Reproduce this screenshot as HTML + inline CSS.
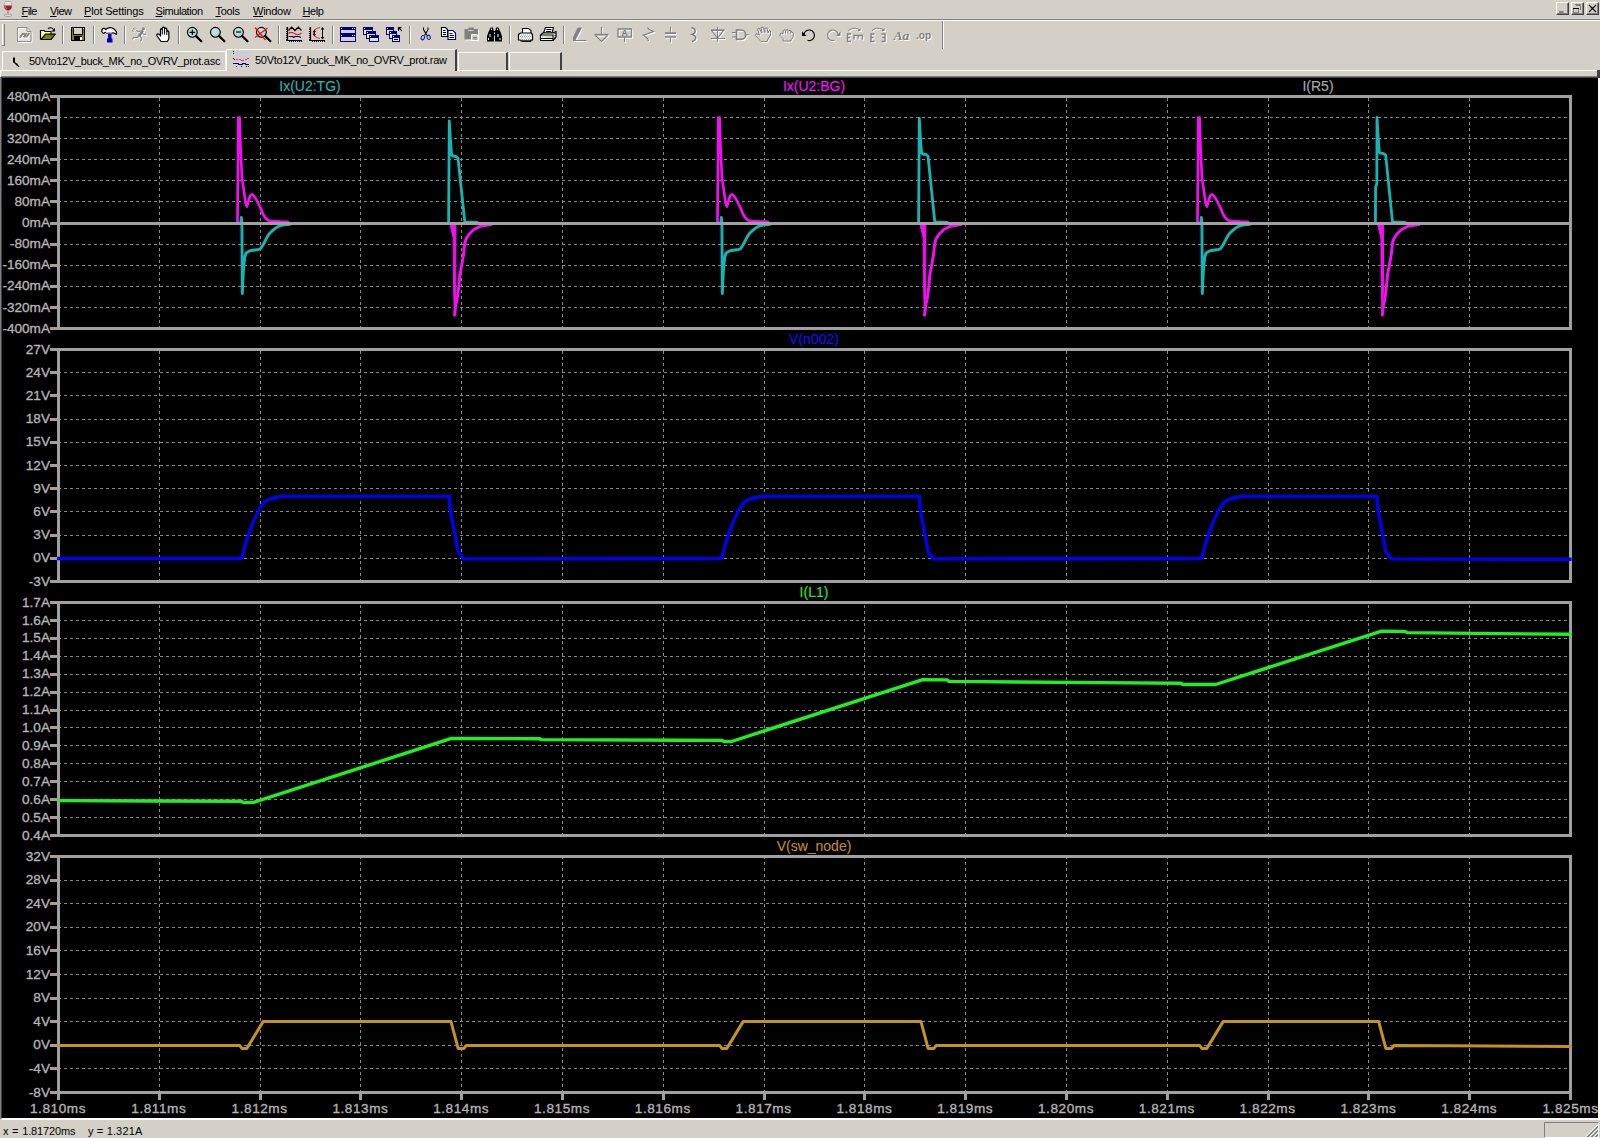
<!DOCTYPE html>
<html lang="en">
<head>
<meta charset="utf-8">
<title>LTspice IV - 50Vto12V_buck_MK_no_OVRV_prot.raw</title>
<style>
html,body{margin:0;padding:0;}
body{width:1600px;height:1138px;overflow:hidden;background:#d4d0c8;position:relative;font-family:"Liberation Sans",Arial,sans-serif;font-size:11px;color:#000;}
.abs{position:absolute;}
#menubar{position:absolute;left:0;top:0;width:1600px;height:19px;}
#menubar span.mi{position:absolute;top:5px;line-height:13px;white-space:nowrap;}
#menubar u{text-decoration:underline;text-underline-offset:1px;}
.hline{position:absolute;left:0;width:1600px;height:1px;}
#toolbar{position:absolute;left:0;top:21px;width:1600px;height:28px;}
.sep{position:absolute;top:4px;width:1px;height:20px;background:#808080;border-right:1px solid #fff;}
.ico{position:absolute;overflow:visible;}
.tab{position:absolute;box-sizing:border-box;white-space:nowrap;}
.tab span{position:absolute;white-space:nowrap;line-height:13px;letter-spacing:-0.3px;}
#status{position:absolute;left:0;top:1120px;width:1600px;height:18px;background:#d4d0c8;}
#status span{position:absolute;top:5px;line-height:13px;white-space:pre;}
.wbtn{position:absolute;top:2px;width:13px;height:13px;box-sizing:border-box;background:#d4d0c8;border:1px solid;border-color:#fff #404040 #404040 #fff;box-shadow:inset -1px -1px 0 #808080;}
#plot{position:absolute;left:0;top:0;}
</style>
</head>
<body>
<!-- ======== menu bar ======== -->
<div id="menubar">
<svg class="ico" style="left:0;top:0" width="16" height="18" viewBox="0 0 16 18"><path d="M5.200 1.500C4.500 3 4 5 4.200 7 4.500 9.500 6.500 10.500 8 10.500S11.500 9.500 11.800 7C12 5 11.500 3 10.800 1.500z" fill="#e6e4df" stroke="#a6a49e" stroke-width="0.800"/><path d="M4.250 5.400H11.750C12 8 10.500 10.300 8 10.300S4 8 4.250 5.400z" fill="#a8162a"/><path d="M5.500 6.200C5.400 7.600 5.900 8.700 6.600 9.300" stroke="#e4707e" stroke-width="1" fill="none"/><rect x="7.200" y="10.300" width="1.600" height="4.400" fill="#a29e9a"/><ellipse cx="8" cy="15.300" rx="3.900" ry="1.200" fill="#e2e0dc" stroke="#96928e" stroke-width="0.800"/></svg>
<span class="mi" style="left:21.5px;letter-spacing:-0.6px"><u>F</u>ile</span>
<span class="mi" style="left:50px;letter-spacing:-0.6px"><u>V</u>iew</span>
<span class="mi" style="left:84px;letter-spacing:-0.17px"><u>P</u>lot Settings</span>
<span class="mi" style="left:155.5px;letter-spacing:-0.42px"><u>S</u>imulation</span>
<span class="mi" style="left:215.5px;letter-spacing:-0.3px"><u>T</u>ools</span>
<span class="mi" style="left:253px;letter-spacing:-0.25px"><u>W</u>indow</span>
<span class="mi" style="left:302.5px;letter-spacing:-0.45px"><u>H</u>elp</span>
<div class="wbtn" style="left:1556px"><svg class="abs" style="left:0;top:0" width="11" height="11"><path d="M2 9h4.500" stroke="#808080" stroke-width="2"/></svg></div>
<div class="wbtn" style="left:1571px"><svg class="abs" style="left:0;top:0" width="11" height="11" shape-rendering="crispEdges"><path d="M3.500 2.500h5v4" stroke="#808080" stroke-width="1" fill="none"/><path d="M3 1.500h6" stroke="#808080" stroke-width="1"/><path d="M1.500 5.500h5v4h-5z" stroke="#808080" stroke-width="1" fill="none"/><path d="M1 5.500h6" stroke="#000" stroke-width="1"/></svg></div>
<div class="wbtn" style="left:1586px"><svg class="abs" style="left:0;top:0" width="11" height="11"><path d="M2 2l7 7M9 2l-7 7" stroke="#000" stroke-width="1.300"/></svg></div>
</div>
<div class="hline" style="top:19px;background:#808080"></div>
<div class="hline" style="top:20px;background:#fff"></div>
<!-- ======== toolbar ======== -->
<svg id="toolbar" width="1600" height="28" viewBox="0 21 1600 28" style="position:absolute;left:0;top:21px">
<defs>
<linearGradient id="lens" x1="0" y1="0" x2="1" y2="1"><stop offset="0" stop-color="#dcdad2"/><stop offset="0.45" stop-color="#c8dcd4"/><stop offset="1" stop-color="#70e0d0"/></linearGradient><g id="mag"><circle cx="0" cy="0" r="4.900" fill="url(#lens)" stroke="#000" stroke-width="1.150"/><path d="M3.800 3.800L9 9" stroke="#000" stroke-width="2.200" stroke-linecap="round"/></g>
<g id="d-pencil"><path d="M577.700 27.500h4.300l-6.500 12.500h-2.500v-2.500z" stroke="none"/><path d="M573 40.500h13.500" stroke-width="1" fill="none"/></g>
<g id="d-gnd"><path d="M601.500 27v7.500M595.500 35.500l6 6 6-6" fill="none" stroke-width="1.200"/><path d="M594.500 34.700h14" fill="none" stroke-width="1.700"/></g>
<g id="d-label"><path d="M618 29h13.500v8h-13.500z" fill="none" stroke-width="1.300" stroke-linejoin="round"/><path d="M624.500 37v5" fill="none" stroke-width="1"/></g>
<g id="d-res"><path d="M647.500 27.500l1.300 1.700 4.700 2.400-10.300 3.600 4.300 3.200 1 2.600" fill="none" stroke-width="1.200"/></g>
<g id="d-cap"><path d="M670.500 27v5.500M670.500 38v4.500" fill="none" stroke-width="1"/><path d="M665 33.200h11M665 37h11" fill="none" stroke-width="1.700"/></g>
<g id="d-ind"><path d="M691.500 27.500c5 1.500 5 5.500.5 7 5 1.500 5 5.500 0 7" fill="none" stroke-width="1.400"/></g>
<g id="d-diode"><path d="M717.500 27v15" fill="none" stroke-width="1"/><path d="M711 30.200h13.500" fill="none" stroke-width="1.700"/><path d="M711.500 30.500l6 7.500 6-7.500" fill="none" stroke-width="1.200"/><path d="M711 38.500h14" fill="none" stroke-width="1"/></g>
<g id="d-gate"><path d="M736.500 30h4.500a4.700 4.700 0 0 1 0 9.400h-4.500z" fill="none" stroke-width="1.700"/><path d="M732 32.500h4M732 37h4M746 34.700h3.500" fill="none" stroke-width="1"/></g>
<g id="d-move"><path d="M761 41.500l-5.500-6 .8-2 3.200 1.700-2-6.200 1.500-1 3 5-1-5.500 2-.5 2 5.500v-4.500h2l1 5 1-2.500 1.500.5v4l-2.500 4-1 2.500z" fill="none" stroke-width="1"/></g>
<g id="d-drag"><path d="M783 41v-2.500l-3-3v-1.500l1.500-1 1.500 1v-3l1.500-1.200 1.500.7.500-.8h1.500l1 1 1.200-.5 1.300 1v1l1.500.5.500 1.500-.5 3-2 2.500V41z" fill="none" stroke-width="1"/><path d="M785.500 31v2.500M788 30v3.500M790.500 31v2.500" fill="none" stroke-width="1"/></g>
<g id="d-redo"><path d="M834.500 40.300a5.300 5.300 0 1 1 3.500-6.300" fill="none" stroke-width="1.100"/><path d="M840.500 31.500v4.500h-4.500z" stroke="none"/></g>
<g id="d-rot"><path d="M851 34h-3.500v7.500h3.500M847.500 37.500h2.500" fill="none" stroke-width="1.400"/><path d="M854 39.500v-4h8.500v4M858.200 35.500v3" fill="none" stroke-width="1.300"/><path d="M848.500 31c2-3 6-3.500 10.500-1.500" fill="none" stroke-width="1"/><path d="M860.500 28v3h-3z" stroke="none"/></g>
<g id="d-mir"><path d="M874.500 34h-3.500v7.500h3.500M871 37.500h2.500" fill="none" stroke-width="1.400"/><path d="M881.500 34h3.500v7.500h-3.500M885 37.500h-2.500" fill="none" stroke-width="1.400"/><path d="M872 31c2-3 6-3.500 11-1.500" fill="none" stroke-width="1"/><path d="M884.500 28v3h-3z" stroke="none"/></g>
<g id="d-run"><circle cx="143.500" cy="28.800" r="1.500" stroke="none"/><path d="M143 30.500l-4 5.500" fill="none" stroke-width="2.600"/><path d="M142 32.500l1.500 1.800h2.700M141 31l-3 .5-1.500-1.200M139.500 35.500l-2 2h-4l-1 1.700M140 35.500l1.800 3.500-1.500 2.500" fill="none" stroke-width="1.100"/><path d="M133 28.500l1.500 1M132 30.500l1.500 1M135 27.500l1 1" fill="none" stroke-width="1"/></g>
<g id="d-new"><path d="M17.500 27.500h9.500l4 4v10h-13.500z" fill="none" stroke-width="1"/><path d="M27 27.500v4h4" fill="none" stroke-width="1"/><path d="M19.800 37.700l2.700-3.700h3.300l-2 3.200M24 36.500h2.800l2.600-3.800" fill="none" stroke-width="2"/></g>
<g id="d-paste"><path d="M464.500 29h13.500v10.500h-13.500z" stroke="none"/><path d="M468.500 27.500h5.500v2h-5.500z" stroke="none"/></g>
</defs>
<!-- gripper -->
<path d="M2.500 24v21" stroke="#fff" stroke-width="1"/><path d="M3.500 24v21" stroke="#d4d0c8" stroke-width="1"/><path d="M4.500 24v21M2 45.500h3" stroke="#808080" stroke-width="1"/>
<!-- separators -->
<path d="M62.500 26v18M93.500 26v18M124.500 26v18M178.500 26v18M278.500 26v18M332.500 26v18M409.500 26v18M509.500 26v18M563.500 26v18" stroke="#808080" stroke-width="1"/>
<path d="M63.500 26v18M94.500 26v18M125.500 26v18M179.500 26v18M279.500 26v18M333.500 26v18M410.500 26v18M510.500 26v18M564.500 26v18" stroke="#fff" stroke-width="1"/>
<path d="M942.500 21v28" stroke="#808080" stroke-width="1"/><path d="M943.500 21v28" stroke="#fff" stroke-width="1"/>
<!-- new (disabled) -->
<path d="M18 28h9l3.500 3.500V41.500H18z" fill="#e4e2dc"/>
<use href="#d-new" x="1" y="1" stroke="#fff" fill="#fff"/><use href="#d-new" stroke="#8c8c8c" fill="#8c8c8c"/>
<!-- open -->
<g>
<path d="M40.500 39.500v-9h3.500l1 1h6v3" fill="#ffff9c" stroke="#000" stroke-width="1.200"/>
<path d="M41 39.500l4.500-5.300h9.800l-4.300 5.300z" fill="#808000" stroke="#000" stroke-width="1.200" stroke-linejoin="round"/>
<path d="M48 28.800c1.500-1.500 4-1.500 5.800 1" fill="none" stroke="#000" stroke-width="1.100"/><path d="M55 28v3.500h-3.500z" fill="#000"/>
</g>
<!-- save -->
<g shape-rendering="crispEdges">
<rect x="71" y="27" width="14" height="14" fill="#000"/>
<rect x="72" y="28" width="12" height="12" fill="#808000"/>
<rect x="74" y="28" width="8" height="6" fill="#d4d0c8"/>
<rect x="73" y="27" width="1" height="14" fill="#000" opacity="0"/>
<rect x="74" y="34" width="8" height="1" fill="#000"/>
<rect x="74" y="36" width="8" height="5" fill="#000"/>
<rect x="80" y="37" width="2" height="3" fill="#fff"/>
<rect x="83" y="28" width="1" height="1" fill="#fff"/><rect x="73" y="28" width="1" height="7" fill="#000"/><rect x="82" y="28" width="1" height="7" fill="#000"/>
</g>
<!-- hammer -->
<g>
<path d="M102 29.500c1-1.500 2.500-1.500 4 0 2-2.500 7-3.500 10.500 2.500v2.500c-1.500-1.500-3-2-5-1.500h-4.500c-1-1-2.500-.5-3.500.5-1.300-.8-2-2.500-1.500-4z" fill="#fff" stroke="#000" stroke-width="1.200" stroke-linejoin="round"/>
<path d="M106 32.500h6" stroke="#b0b0b0" stroke-width="1"/>
<path d="M108 34h3.500v4.500h1v4h-5.500v-4h1z" fill="#0000c0"/>
</g>
<!-- run (disabled) -->
<use href="#d-run" x="1" y="1" stroke="#fff" fill="#fff"/><use href="#d-run" stroke="#808080" fill="#808080"/>
<!-- halt hand -->
<g>
<path d="M160.500 36V29.500c.3-1.200 1.500-1.200 1.800 0V28c.4-1.300 1.900-1.300 2.300 0v1c.4-1.200 1.800-1.200 2.200 0v2.500c.5-1 1.700-.8 2 .3V39l-1.500 2.500h-6.300L156.500 35c.8-1.300 1.800-1.500 2.800-.5z" fill="#fff" stroke="#000" stroke-width="1.200" stroke-linejoin="round"/>
<path d="M162.300 29.500v5M164.600 29v5.500M166.800 31v4" stroke="#000" stroke-width="1" fill="none"/>
</g>
<!-- magnifiers -->
<use href="#mag" x="192.300" y="32.300"/><path d="M189.500 32.300h5.600M192.300 29.500v5.600" stroke="#000" stroke-width="1.200"/>
<use href="#mag" x="215.400" y="32.300"/>
<use href="#mag" x="238.500" y="32.300"/><path d="M236 32h5" stroke="#000" stroke-width="1.200"/>
<use href="#mag" x="261.400" y="32.300"/><path d="M255 27.500l10.500 12.500M267.500 28l-12.500 9.500" stroke="#f01010" stroke-width="1.300"/>
<!-- plot icon 1 -->
<g fill="none">
<path d="M287.500 27v14M286 40.500h16" stroke="#000" stroke-width="1.200"/>
<path d="M286 29.500h1M286 31.500h1M286 33.500h1M286 35.500h1M286 37.500h1M286 28h1M286 39.500h1" stroke="#000" stroke-width="1"/>
<path d="M289.500 41v1M291.500 41v1M293.500 41v1M295.500 41v1M297.500 41v1M299.500 41v1M301.500 41v1" stroke="#000" stroke-width="1"/>
<path d="M288.500 30.500l3.200-3.300 3.300 3.300 3.300-3.300 3.200 3.300" stroke="#000" stroke-width="1.250"/>
<path d="M288.500 33.500c1.500-1.500 3-1.500 5-.5s3.500 2 5 1.500 2-.8 3-1.500" stroke="#e02020" stroke-width="1.100"/>
<path d="M288.500 36.500h4l1.200 1 1.200-1h4l2 1" stroke="#000080" stroke-width="1.200"/>
</g>
<!-- plot icon 2 -->
<g fill="none">
<path d="M310.500 27v14M309 40.500h16" stroke="#000" stroke-width="1.200"/>
<path d="M309 29.500h1M309 31.500h1M309 33.500h1M309 35.500h1M309 37.500h1M309 28h1M309 39.500h1" stroke="#000" stroke-width="1"/>
<path d="M312.500 41v1M314.500 41v1M316.500 41v1M318.500 41v1M320.500 41v1M322.500 41v1M324.500 41v1" stroke="#000" stroke-width="1"/>
<path d="M320 27.500c-9 2-9 9 0 11" stroke="#e83030" stroke-width="1.100"/>
<path d="M322.500 28v10.500" stroke="#000" stroke-width="1"/><path d="M322.500 27l1.800 2.500h-3.600zM322.500 39.500l1.800-2.500h-3.600z" fill="#000"/>
<path d="M314.500 31v4" stroke="#000" stroke-width="1"/><path d="M314.500 30l1.500 2h-3zM314.500 36l1.500-2h-3z" fill="#000"/>
</g>
<!-- tile -->
<g shape-rendering="crispEdges">
<rect x="340" y="27" width="16" height="15" fill="#000080"/>
<rect x="341" y="30" width="14" height="3" fill="#d4d0c8"/><rect x="341" y="37" width="14" height="4" fill="#d4d0c8"/>
<rect x="341" y="28" width="1" height="1" fill="#fff"/><rect x="352" y="28" width="1" height="1" fill="#fff"/><rect x="354" y="28" width="1" height="1" fill="#fff"/>
<rect x="341" y="35" width="1" height="1" fill="#fff"/><rect x="352" y="35" width="1" height="1" fill="#fff"/><rect x="354" y="35" width="1" height="1" fill="#fff"/>
</g>
<!-- cascade -->
<g shape-rendering="crispEdges">
<rect x="363" y="27" width="10" height="8" fill="#000080"/><rect x="364" y="30" width="8" height="4" fill="#e8e8f4"/><rect x="364" y="28" width="1" height="1" fill="#fff"/>
<rect x="366" y="31" width="10" height="8" fill="#000080"/><rect x="367" y="34" width="8" height="4" fill="#e8e8f4"/><rect x="367" y="32" width="1" height="1" fill="#fff"/>
<rect x="369" y="35" width="10" height="7" fill="#000080"/><rect x="370" y="38" width="8" height="3" fill="#e0e0ec"/><rect x="370" y="36" width="1" height="1" fill="#fff"/>
</g>
<!-- close all -->
<g shape-rendering="crispEdges">
<rect x="386" y="27" width="8" height="8" fill="#000080"/><rect x="387" y="30" width="6" height="4" fill="#e8e8f4"/><rect x="387" y="28" width="1" height="1" fill="#fff"/>
<rect x="389" y="31" width="8" height="8" fill="#000080"/><rect x="390" y="34" width="6" height="4" fill="#e8e8f4"/><rect x="390" y="32" width="1" height="1" fill="#fff"/>
<rect x="392" y="35" width="8" height="7" fill="#000080"/><rect x="393" y="38" width="6" height="3" fill="#e8e8f4"/><rect x="393" y="36" width="1" height="1" fill="#fff"/>
<rect x="394" y="39" width="4" height="1" fill="#000"/>
</g>
<path d="M398 27.500h3.500M398.500 27v4M398.500 27.500l3.500 3.500" stroke="#000" stroke-width="1.100" fill="none"/>
<!-- cut -->
<g fill="none">
<path d="M423.500 27.500v2l3.500 6M428 27.500v2l-3.500 6" stroke="#000" stroke-width="1.050"/>
<ellipse cx="422.800" cy="37.700" rx="1.600" ry="2.200" stroke="#1010c0" stroke-width="1" transform="rotate(20 422.800 37.700)"/>
<ellipse cx="428.700" cy="37.300" rx="1.600" ry="2.200" stroke="#1010c0" stroke-width="1" transform="rotate(-20 428.700 37.300)"/>
</g>
<!-- copy -->
<g>
<path d="M441.500 27.500h4l2 2v7h-6z" fill="#fff" stroke="#000" stroke-width="1.100"/>
<path d="M443 30.500h2.500M443 32.500h3M443 34.500h3" stroke="#000" stroke-width="1"/>
<path d="M448 30.500h5l2.500 2.500v6.500h-7.500z" fill="#fff" stroke="#000080" stroke-width="1.200"/>
<path d="M449.500 33.500h3M449.500 35.500h4.500M449.500 37.500h4.500" stroke="#000" stroke-width="1"/>
</g>
<!-- paste (disabled) -->
<use href="#d-paste" x="1" y="1" fill="#fff"/><use href="#d-paste" fill="#808080"/>
<path d="M468 30.500h5.500" stroke="#d4d0c8" stroke-width="1"/>
<path d="M471.500 34.500h5l2 1.500v4.500h-7z" fill="#d4d0c8" stroke="#fff" stroke-width="1"/><path d="M473 37.500h4M473 39h4" stroke="#808080" stroke-width="1"/>
<!-- find (binoculars) -->
<g fill="#000">
<path d="M490.500 27.500h2.500l.5 2.500.5 1.500v10h-7V36l1.500-4 1-2z"/><path d="M496 27.500h2.500l1 2.500 1 2 1.500 4v5.500h-7V31.500l.5-1.500z"/><rect x="493" y="31" width="3" height="4.500"/>
<rect x="491" y="28.500" width="1" height="1.500" fill="#fff"/><rect x="497" y="28.500" width="1" height="1.500" fill="#fff"/>
<rect x="489.500" y="34" width="1" height="3" fill="#fff"/><rect x="497.500" y="34" width="1" height="3" fill="#fff"/>
<rect x="488" y="38" width="1" height="2" fill="#fff"/><rect x="499.500" y="38" width="1" height="2" fill="#fff"/>
<rect x="494" y="32.500" width="1" height="1.500" fill="#fff"/>
</g>
<!-- print setup -->
<g>
<path d="M522.500 33v-4.500h6l2.500 2v2.500" fill="#fff" stroke="#000" stroke-width="1.100"/>
<path d="M518.500 34.500l2-1.500h10.500l1.500 1.500v5.500h-1.500v1h-10v-1h-2.500z" fill="#fff" stroke="#000" stroke-width="1.200" stroke-linejoin="round"/>
<path d="M521 35h10M520 36.500h11M521 38h10M520 39.500h11" stroke="#909090" stroke-width="1" stroke-dasharray="1 1"/>
<path d="M522 41.200h9" stroke="#000" stroke-width="1.300"/>
</g>
<!-- print -->
<g>
<path d="M543.500 33l2-5.500h8l-1.500 5.500z" fill="#fff" stroke="#000" stroke-width="1.100" stroke-linejoin="round"/>
<path d="M546.500 29.500h5M546 31.500h5" stroke="#000" stroke-width="1"/>
<path d="M540.500 35l2.500-2h10l3 -1.500v5.500l-3 3.500h-12.500z" fill="#fff" stroke="#000" stroke-width="1.200" stroke-linejoin="round"/>
<path d="M541 35h12v5.500M541 38.500h12" stroke="#000" stroke-width="1.100" fill="none"/>
<path d="M542 36.700h10" stroke="#d4d0c8" stroke-width="1.300"/><path d="M546.500 36.700h5" stroke="#c8d848" stroke-width="1.300"/>
<path d="M554 34.500l1.500-1.500M554 36.500l1.500-1.500M554 38.500l1.500-1.700" stroke="#000" stroke-width=".8"/>
</g>
<!-- disabled drawing tools -->
<g stroke="#fff" fill="#fff" transform="translate(1 1)">
<use href="#d-pencil"/><use href="#d-gnd"/><use href="#d-label"/><use href="#d-res"/><use href="#d-cap"/><use href="#d-ind"/><use href="#d-diode"/><use href="#d-gate"/><use href="#d-move"/><use href="#d-drag"/><use href="#d-redo"/><use href="#d-rot"/><use href="#d-mir"/>
</g>
<g stroke="#808080" fill="#808080">
<use href="#d-pencil"/><use href="#d-gnd"/><use href="#d-label"/><use href="#d-res"/><use href="#d-cap"/><use href="#d-ind"/><use href="#d-diode"/><use href="#d-gate"/><use href="#d-move"/><use href="#d-drag"/><use href="#d-redo"/><use href="#d-rot"/><use href="#d-mir"/>
</g>
<!-- undo (active) -->
<path d="M807.500 40.300a5.300 5.300 0 1 0 -3.500-6.300" fill="none" stroke="#000" stroke-width="1.100"/><path d="M802 31.500v4.500h4.500z" fill="#000"/>
<!-- Aa and .op (disabled text) -->
<g font-family="Liberation Serif, serif" font-style="italic" font-weight="bold" font-size="13.500">
<text x="894.500" y="41" fill="#fff">Aa</text><text x="893.500" y="40" fill="#808080">Aa</text>
</g>
<text x="621.600" y="36.400" font-family="Liberation Sans, sans-serif" font-weight="bold" font-size="8.500" fill="#7c7c7c">A</text>
<g font-family="Liberation Sans, sans-serif" font-weight="bold" font-size="10">
<text x="917" y="40" fill="#fff">.op</text><text x="916" y="39" fill="#808080">.op</text>
</g>
</svg>
<!-- ======== document tabs ======== -->
<div id="tabs" class="abs" style="left:0;top:49px;width:1600px;height:22px">
  <!-- inactive tab -->
  <div class="tab" style="left:2px;top:2px;width:224px;height:20px;border-left:1px solid #fff;border-top:1px solid #fff;border-right:1px solid #f4f2ec;border-top-left-radius:2px;">
    <svg class="abs" style="left:9px;top:5px" width="9" height="11" viewBox="0 0 9 11"><path d="M2 0.500v5.200" stroke="#000" stroke-width="2" fill="none"/><path d="M2.500 5.500l4.500 4.300" stroke="#000" stroke-width="1.300" fill="none"/><rect x="4" y="6.500" width="1.500" height="1.500" fill="#000"/></svg>
    <span id="t1" style="left:26px;top:3px">50Vto12V_buck_MK_no_OVRV_prot.asc</span>
  </div>
  <!-- active tab -->
  <div class="tab" style="left:226px;top:0;width:231px;height:22px;border-left:1px solid #fff;border-top:1px solid #fff;border-right:2px solid #404040;background:#d4d0c8;border-top-left-radius:2px;">
    <svg class="abs" style="left:6px;top:0" width="17" height="18" viewBox="0 0 17 18"><rect x="0" y="1" width="16" height="10" fill="#cdcbd4"/><rect x="0" y="11" width="16" height="6" fill="#d2d0d4"/><g shape-rendering="crispEdges"><path d="M0.500 1v1M0.500 3v1M0.500 8v1M1.500 9v1" stroke="#000" stroke-width="1"/><path d="M3 9.500h2M6 9.500h1.500M8 10.500h2.500M12 9.500h2M14 8.500h2" stroke="#e83838" stroke-width="1"/><path d="M0 13.500h5.500v1h3.500v-1h3.500v1h3.500" stroke="#000070" stroke-width="1" fill="none"/><path d="M3 16.500h1M8 16.500h1M13 16.500h1M15 16.500h1" stroke="#000" stroke-width="1"/></g></svg>
    <span id="t2" style="left:28px;top:4px">50Vto12V_buck_MK_no_OVRV_prot.raw</span>
  </div>
  <!-- two empty tabs -->
  <div class="tab" style="left:458px;top:3px;width:50px;height:19px;border-left:1px solid #fff;border-top:1px solid #fff;border-right:2px solid #404040;"></div>
  <div class="tab" style="left:509px;top:3px;width:53px;height:19px;border-left:1px solid #fff;border-top:1px solid #fff;border-right:2px solid #404040;"></div>
</div>
<div class="hline" style="top:70px;background:#fff;left:0;width:226px"></div>
<div class="hline" style="top:70px;background:#fff;left:457px;width:1141px"></div>
<!-- MDI client sunken edge -->
<div class="abs" style="left:0;top:76px;width:1600px;height:1044px;box-sizing:border-box;border:1px solid;border-color:#808080 #fff #fff #808080;"></div>
<div class="abs" style="left:1px;top:77px;width:1598px;height:1042px;box-sizing:border-box;border:1px solid;border-color:#404040 #fff #fff #404040;"></div>
<div class="abs" style="left:1597px;top:70px;width:3px;height:8px;background:#404040"></div>
<div class="abs" style="left:0;top:70px;width:1px;height:7px;background:#fff"></div>
<svg id="plot" width="1600" height="1138" viewBox="0 0 1600 1138" shape-rendering="crispEdges">
<rect x="2" y="78" width="1596" height="1040" fill="#000"/>
<path d="M58 117.5 H1570 M58 138.5 H1570 M58 159.5 H1570 M58 180.5 H1570 M58 201.5 H1570 M58 223.5 H1570 M58 244.5 H1570 M58 265.5 H1570 M58 286.5 H1570 M58 307.5 H1570" stroke="#8a8a8a" stroke-width="1" stroke-dasharray="3 3" fill="none"/>
<path d="M159.5 329 V96 M260.5 329 V96 M360.5 329 V96 M461.5 329 V96 M562.5 329 V96 M663.5 329 V96 M764.5 329 V96 M864.5 329 V96 M965.5 329 V96 M1066.5 329 V96 M1167.5 329 V96 M1268.5 329 V96 M1368.5 329 V96 M1469.5 329 V96" stroke="#8a8a8a" stroke-width="1" stroke-dasharray="3 3" fill="none"/>
<path d="M58 372.5 H1570 M58 395.5 H1570 M58 419.5 H1570 M58 442.5 H1570 M58 465.5 H1570 M58 488.5 H1570 M58 511.5 H1570 M58 535.5 H1570 M58 558.5 H1570" stroke="#8a8a8a" stroke-width="1" stroke-dasharray="3 3" fill="none"/>
<path d="M159.5 582 V349 M260.5 582 V349 M360.5 582 V349 M461.5 582 V349 M562.5 582 V349 M663.5 582 V349 M764.5 582 V349 M864.5 582 V349 M965.5 582 V349 M1066.5 582 V349 M1167.5 582 V349 M1268.5 582 V349 M1368.5 582 V349 M1469.5 582 V349" stroke="#8a8a8a" stroke-width="1" stroke-dasharray="3 3" fill="none"/>
<path d="M58 620.5 H1570 M58 638.5 H1570 M58 656.5 H1570 M58 674.5 H1570 M58 692.5 H1570 M58 710.5 H1570 M58 727.5 H1570 M58 745.5 H1570 M58 763.5 H1570 M58 781.5 H1570 M58 799.5 H1570 M58 817.5 H1570" stroke="#8a8a8a" stroke-width="1" stroke-dasharray="3 3" fill="none"/>
<path d="M159.5 836 V602 M260.5 836 V602 M360.5 836 V602 M461.5 836 V602 M562.5 836 V602 M663.5 836 V602 M764.5 836 V602 M864.5 836 V602 M965.5 836 V602 M1066.5 836 V602 M1167.5 836 V602 M1268.5 836 V602 M1368.5 836 V602 M1469.5 836 V602" stroke="#8a8a8a" stroke-width="1" stroke-dasharray="3 3" fill="none"/>
<path d="M58 880.5 H1570 M58 903.5 H1570 M58 927.5 H1570 M58 950.5 H1570 M58 974.5 H1570 M58 998.5 H1570 M58 1021.5 H1570 M58 1045.5 H1570 M58 1068.5 H1570" stroke="#8a8a8a" stroke-width="1" stroke-dasharray="3 3" fill="none"/>
<path d="M159.5 1093 V856 M260.5 1093 V856 M360.5 1093 V856 M461.5 1093 V856 M562.5 1093 V856 M663.5 1093 V856 M764.5 1093 V856 M864.5 1093 V856 M965.5 1093 V856 M1066.5 1093 V856 M1167.5 1093 V856 M1268.5 1093 V856 M1368.5 1093 V856 M1469.5 1093 V856" stroke="#8a8a8a" stroke-width="1" stroke-dasharray="3 3" fill="none"/>
<rect x="58.5" y="96.5" width="1512" height="232" fill="none" stroke="#a0a0a0" stroke-width="3"/>
<path d="M50 96.5 H58 M50 117.5 H58 M50 138.5 H58 M50 159.5 H58 M50 180.5 H58 M50 201.5 H58 M50 223.5 H58 M50 244.5 H58 M50 265.5 H58 M50 286.5 H58 M50 307.5 H58 M50 328.5 H58" stroke="#a0a0a0" stroke-width="3" fill="none"/>
<g font-family="Liberation Sans, Arial, sans-serif" font-size="13.6" fill="#b4b4b4" stroke="#b4b4b4" stroke-width="0.35" text-anchor="end" shape-rendering="auto">
<text x="50" y="100.6">480mA</text>
<text x="50" y="121.69">400mA</text>
<text x="50" y="142.78">320mA</text>
<text x="50" y="163.87">240mA</text>
<text x="50" y="184.96">160mA</text>
<text x="50" y="206.05">80mA</text>
<text x="50" y="227.15">0mA</text>
<text x="50" y="248.24">-80mA</text>
<text x="50" y="269.33">-160mA</text>
<text x="50" y="290.42">-240mA</text>
<text x="50" y="311.51">-320mA</text>
<text x="50" y="332.6">-400mA</text>
</g>
<rect x="58.5" y="349.5" width="1512" height="232" fill="none" stroke="#a0a0a0" stroke-width="3"/>
<path d="M50 349.5 H58 M50 372.5 H58 M50 395.5 H58 M50 419.5 H58 M50 442.5 H58 M50 465.5 H58 M50 488.5 H58 M50 511.5 H58 M50 535.5 H58 M50 558.5 H58 M50 581.5 H58" stroke="#a0a0a0" stroke-width="3" fill="none"/>
<g font-family="Liberation Sans, Arial, sans-serif" font-size="13.6" fill="#b4b4b4" stroke="#b4b4b4" stroke-width="0.35" text-anchor="end" shape-rendering="auto">
<text x="50" y="353.6">27V</text>
<text x="50" y="376.8">24V</text>
<text x="50" y="400">21V</text>
<text x="50" y="423.2">18V</text>
<text x="50" y="446.4">15V</text>
<text x="50" y="469.6">12V</text>
<text x="50" y="492.8">9V</text>
<text x="50" y="516">6V</text>
<text x="50" y="539.2">3V</text>
<text x="50" y="562.4">0V</text>
<text x="50" y="585.6">-3V</text>
</g>
<rect x="58.5" y="602.5" width="1512" height="233" fill="none" stroke="#a0a0a0" stroke-width="3"/>
<path d="M50 602.5 H58 M50 620.5 H58 M50 638.5 H58 M50 656.5 H58 M50 674.5 H58 M50 692.5 H58 M50 710.5 H58 M50 727.5 H58 M50 745.5 H58 M50 763.5 H58 M50 781.5 H58 M50 799.5 H58 M50 817.5 H58 M50 835.5 H58" stroke="#a0a0a0" stroke-width="3" fill="none"/>
<g font-family="Liberation Sans, Arial, sans-serif" font-size="13.6" fill="#b4b4b4" stroke="#b4b4b4" stroke-width="0.35" text-anchor="end" shape-rendering="auto">
<text x="50" y="606.6">1.7A</text>
<text x="50" y="624.52">1.6A</text>
<text x="50" y="642.45">1.5A</text>
<text x="50" y="660.37">1.4A</text>
<text x="50" y="678.29">1.3A</text>
<text x="50" y="696.22">1.2A</text>
<text x="50" y="714.14">1.1A</text>
<text x="50" y="732.06">1.0A</text>
<text x="50" y="749.98">0.9A</text>
<text x="50" y="767.91">0.8A</text>
<text x="50" y="785.83">0.7A</text>
<text x="50" y="803.75">0.6A</text>
<text x="50" y="821.68">0.5A</text>
<text x="50" y="839.6">0.4A</text>
</g>
<rect x="58.5" y="856.5" width="1512" height="236" fill="none" stroke="#a0a0a0" stroke-width="3"/>
<path d="M50 856.5 H58 M50 880.5 H58 M50 903.5 H58 M50 927.5 H58 M50 950.5 H58 M50 974.5 H58 M50 998.5 H58 M50 1021.5 H58 M50 1045.5 H58 M50 1068.5 H58 M50 1092.5 H58 M58.5 1092.5 V1100 M159.5 1092.5 V1100 M260.5 1092.5 V1100 M360.5 1092.5 V1100 M461.5 1092.5 V1100 M562.5 1092.5 V1100 M663.5 1092.5 V1100 M764.5 1092.5 V1100 M864.5 1092.5 V1100 M965.5 1092.5 V1100 M1066.5 1092.5 V1100 M1167.5 1092.5 V1100 M1268.5 1092.5 V1100 M1368.5 1092.5 V1100 M1469.5 1092.5 V1100 M1570.5 1092.5 V1100" stroke="#a0a0a0" stroke-width="3" fill="none"/>
<g font-family="Liberation Sans, Arial, sans-serif" font-size="13.6" fill="#b4b4b4" stroke="#b4b4b4" stroke-width="0.35" text-anchor="end" shape-rendering="auto">
<text x="50" y="860.6">32V</text>
<text x="50" y="884.2">28V</text>
<text x="50" y="907.8">24V</text>
<text x="50" y="931.4">20V</text>
<text x="50" y="955">16V</text>
<text x="50" y="978.6">12V</text>
<text x="50" y="1002.2">8V</text>
<text x="50" y="1025.8">4V</text>
<text x="50" y="1049.4">0V</text>
<text x="50" y="1073">-4V</text>
<text x="50" y="1096.6">-8V</text>
</g>
<g font-family="Liberation Sans, Arial, sans-serif" font-size="13.6" fill="#b4b4b4" stroke="#b4b4b4" stroke-width="0.35" text-anchor="middle" letter-spacing="0.55">
<text x="58" y="1113">1.810ms</text>
<text x="158.8" y="1113">1.811ms</text>
<text x="259.6" y="1113">1.812ms</text>
<text x="360.4" y="1113">1.813ms</text>
<text x="461.2" y="1113">1.814ms</text>
<text x="562" y="1113">1.815ms</text>
<text x="662.8" y="1113">1.816ms</text>
<text x="763.6" y="1113">1.817ms</text>
<text x="864.4" y="1113">1.818ms</text>
<text x="965.2" y="1113">1.819ms</text>
<text x="1066" y="1113">1.820ms</text>
<text x="1166.8" y="1113">1.821ms</text>
<text x="1267.6" y="1113">1.822ms</text>
<text x="1368.4" y="1113">1.823ms</text>
<text x="1469.2" y="1113">1.824ms</text>
<text x="1598.5" y="1113" text-anchor="end">1.825ms</text>
</g>
<g font-family="Liberation Sans, Arial, sans-serif" font-size="14" text-anchor="middle" stroke-width="0.15">
<text x="310" y="90.8" fill="#20b8b0" stroke="#20b8b0">Ix(U2:TG)</text>
<text x="814" y="90.8" fill="#f018f0" stroke="#f018f0">Ix(U2:BG)</text>
<text x="1318" y="90.8" fill="#a8a8a8" stroke="#a8a8a8">I(R5)</text>
<text x="814" y="343.8" fill="#1010e8" stroke="#1010e8">V(n002)</text>
<text x="814" y="596.8" fill="#30e030" stroke="#30e030">I(L1)</text>
<text x="814" y="850.8" fill="#c08830" stroke="#c08830">V(sw_node)</text>
</g>
<polyline points="240.8,223 241.4,217.5 241.9,223 242.3,293.6 243.3,272 244.6,258 246,253 250,250.8 255,250 258.7,249.4 260.5,248.8 263,245 266.5,238.3 269,234 272.5,230.6 276,227.8 280,225.8 285,224.7 290,224.2" fill="none" stroke="#18b4b4" stroke-width="2.9" stroke-linejoin="round" stroke-linecap="round" shape-rendering="auto"/>
<polyline points="237.5,223 238.3,117.5 239.6,117.5 240.6,150 242,178 244.2,193 245.5,203 247,206.5 248.5,201 250,196 252,194.3 254,196 256.5,200 260.6,208 263,214 265.5,218 268,220.3 272,221.2 280,221.6 288,221.8" fill="none" stroke="#f010f0" stroke-width="2.7" stroke-linejoin="round" stroke-linecap="round" shape-rendering="auto"/>
<polyline points="720.8,223 721.4,217.5 721.9,223 722.3,293.6 723.3,272 724.6,258 726,253 730,250.8 735,250 738.7,249.4 740.5,248.8 743,245 746.5,238.3 749,234 752.5,230.6 756,227.8 760,225.8 765,224.7 770,224.2" fill="none" stroke="#18b4b4" stroke-width="2.9" stroke-linejoin="round" stroke-linecap="round" shape-rendering="auto"/>
<polyline points="717.5,223 718.3,117.5 719.6,117.5 720.6,150 722,178 724.2,193 725.5,203 727,206.5 728.5,201 730,196 732,194.3 734,196 736.5,200 740.6,208 743,214 745.5,218 748,220.3 752,221.2 760,221.6 768,221.8" fill="none" stroke="#f010f0" stroke-width="2.7" stroke-linejoin="round" stroke-linecap="round" shape-rendering="auto"/>
<polyline points="1200.8,223 1201.4,217.5 1201.9,223 1202.3,293.6 1203.3,272 1204.6,258 1206,253 1210,250.8 1215,250 1218.7,249.4 1220.5,248.8 1223,245 1226.5,238.3 1229,234 1232.5,230.6 1236,227.8 1240,225.8 1245,224.7 1250,224.2" fill="none" stroke="#18b4b4" stroke-width="2.9" stroke-linejoin="round" stroke-linecap="round" shape-rendering="auto"/>
<polyline points="1197.5,223 1198.3,117.5 1199.6,117.5 1200.6,150 1202,178 1204.2,193 1205.5,203 1207,206.5 1208.5,201 1210,196 1212,194.3 1214,196 1216.5,200 1220.6,208 1223,214 1225.5,218 1228,220.3 1232,221.2 1240,221.6 1248,221.8" fill="none" stroke="#f010f0" stroke-width="2.7" stroke-linejoin="round" stroke-linecap="round" shape-rendering="auto"/>
<polyline points="448.6,223 449.3,121 450.3,138 451.6,155 453,156 456,156.5 458,158 464.8,222 477.4,222.3" fill="none" stroke="#18b4b4" stroke-width="2.8" stroke-linejoin="round" stroke-linecap="round" shape-rendering="auto"/>
<polygon points="449.9,224.5 455.9,224.5 455.7,290 454.9,315.5 454.3,315.5 453.4,275 453.2,238" fill="#f010f0" stroke="#f010f0" stroke-width="1" shape-rendering="auto"/>
<polyline points="454.6,315 455.8,305 457,300 458.8,286.5 459.8,275 461.7,265 463.7,253.6 464.6,244 466,239 469,234.3 473.8,229.5 480.6,226.2 491,224.6" fill="none" stroke="#f010f0" stroke-width="3" stroke-linejoin="round" stroke-linecap="round" shape-rendering="auto"/>
<polyline points="918.6,223 919.3,118.5 920.3,136 921.6,153 923,154 926,154.5 928,156 934.8,222 947.4,222.3" fill="none" stroke="#18b4b4" stroke-width="2.8" stroke-linejoin="round" stroke-linecap="round" shape-rendering="auto"/>
<polygon points="919.9,224.5 925.9,224.5 925.7,290 924.9,315.5 924.3,315.5 923.4,275 923.2,238" fill="#f010f0" stroke="#f010f0" stroke-width="1" shape-rendering="auto"/>
<polyline points="924.6,315 925.8,305 927,300 928.8,286.5 929.8,275 931.7,265 933.7,253.6 934.6,244 936,239 939,234.3 943.8,229.5 950.6,226.2 961,224.6" fill="none" stroke="#f010f0" stroke-width="3" stroke-linejoin="round" stroke-linecap="round" shape-rendering="auto"/>
<polyline points="1375.4,223 1375.6,187 1376.8,184 1377,117.5 1378,135.2 1379.3,152.2 1380.7,153.2 1383.7,153.7 1385.7,155.2 1392.5,222 1405.1,222.3" fill="none" stroke="#18b4b4" stroke-width="2.8" stroke-linejoin="round" stroke-linecap="round" shape-rendering="auto"/>
<polygon points="1377.6,224.5 1383.6,224.5 1383.4,290 1382.6,315.5 1382,315.5 1381.1,275 1380.9,238" fill="#f010f0" stroke="#f010f0" stroke-width="1" shape-rendering="auto"/>
<polyline points="1382.3,315 1383.5,305 1384.7,300 1386.5,286.5 1387.5,275 1389.4,265 1391.4,253.6 1392.3,244 1393.7,239 1396.7,234.3 1401.5,229.5 1408.3,226.2 1418.7,224.6" fill="none" stroke="#f010f0" stroke-width="3" stroke-linejoin="round" stroke-linecap="round" shape-rendering="auto"/>
<polyline points="57,558.5 241.7,558.5 245,546 249,532.8 254,520 260.6,506.7 263,503.5 265.4,501.4 269,499.5 274,498 278,497 282.8,496.4 449.5,496.4 449.7,506.7 458.2,552 463.5,558.9 721.7,558.5 725,546 729,532.8 734,520 740.6,506.7 743,503.5 745.4,501.4 749,499.5 754,498 758,497 762.8,496.4 919.5,496.4 919.7,506.7 928.2,552 933.5,558.9 1201.7,558.5 1205,546 1209,532.8 1214,520 1220.6,506.7 1223,503.5 1225.4,501.4 1229,499.5 1234,498 1238,497 1242.8,496.4 1377.2,496.4 1377.4,506.7 1385.9,552 1391.2,558.9 1571.5,559.3" fill="none" stroke="#0000f0" stroke-width="3.4" stroke-linejoin="round" shape-rendering="auto"/>
<polyline points="57,800.6 150,801 241.3,801.2 243,802.5 253.5,802.4 451.4,738.4 540,738.8 541,739.6 680,740.2 722.2,740.4 724,741.6 731.6,741.5 922,679.8 947.4,679.9 949,681.4 1100,682.6 1181,683.2 1183,684.5 1215.7,684.5 1380.8,631.3 1405,631.4 1407,632.6 1500,633.6 1571.5,634.3" fill="none" stroke="#20f020" stroke-width="3.4" stroke-linejoin="round" shape-rendering="auto"/>
<polyline points="57,1045.5 239.7,1045.5 241.9,1048.4 246.9,1048.4 263.1,1021.6 451,1021.6 458.1,1048.4 463.75,1048.4 466.25,1045.5 719.7,1045.5 721.9,1048.4 726.9,1048.4 743.1,1021.6 921,1021.6 928.1,1048.4 933.75,1048.4 936.25,1045.5 1199.7,1045.5 1201.9,1048.4 1206.9,1048.4 1223.1,1021.6 1378.7,1021.6 1385.8,1048.4 1391.45,1048.4 1393.95,1045.5 1450,1045.8 1571.5,1046.4" fill="none" stroke="#c49220" stroke-width="3" stroke-linejoin="round" shape-rendering="auto"/>
<path d="M58 223.05 H1570" stroke="#a0a0a0" stroke-width="3" fill="none"/>
</svg>
<!-- ======== status bar ======== -->
<div id="status"><span id="st" style="left:3px;word-spacing:0.8px;letter-spacing:-0.12px">x = 1.81720ms</span><span id="st2" style="left:88px;letter-spacing:0.15px">y = 1.321A</span><div class="abs" style="left:1544px;top:2px;width:55px;height:16px;box-sizing:border-box;border:1px solid;border-color:#808080 #fff #fff #808080;"></div>
<svg class="abs" style="left:1585px;top:4px" width="13" height="13" viewBox="0 0 13 13"><path d="M12.500 1L1 12.500M12.500 5L5 12.500M12.500 9L9 12.500" stroke="#fff" stroke-width="1"/><path d="M13 2L2 13M13 3L3 13M13 6L6 13M13 7L7 13M13 10L10 13M13 11L11 13" stroke="#808080" stroke-width="1"/></svg>
</div>
</body>
</html>
